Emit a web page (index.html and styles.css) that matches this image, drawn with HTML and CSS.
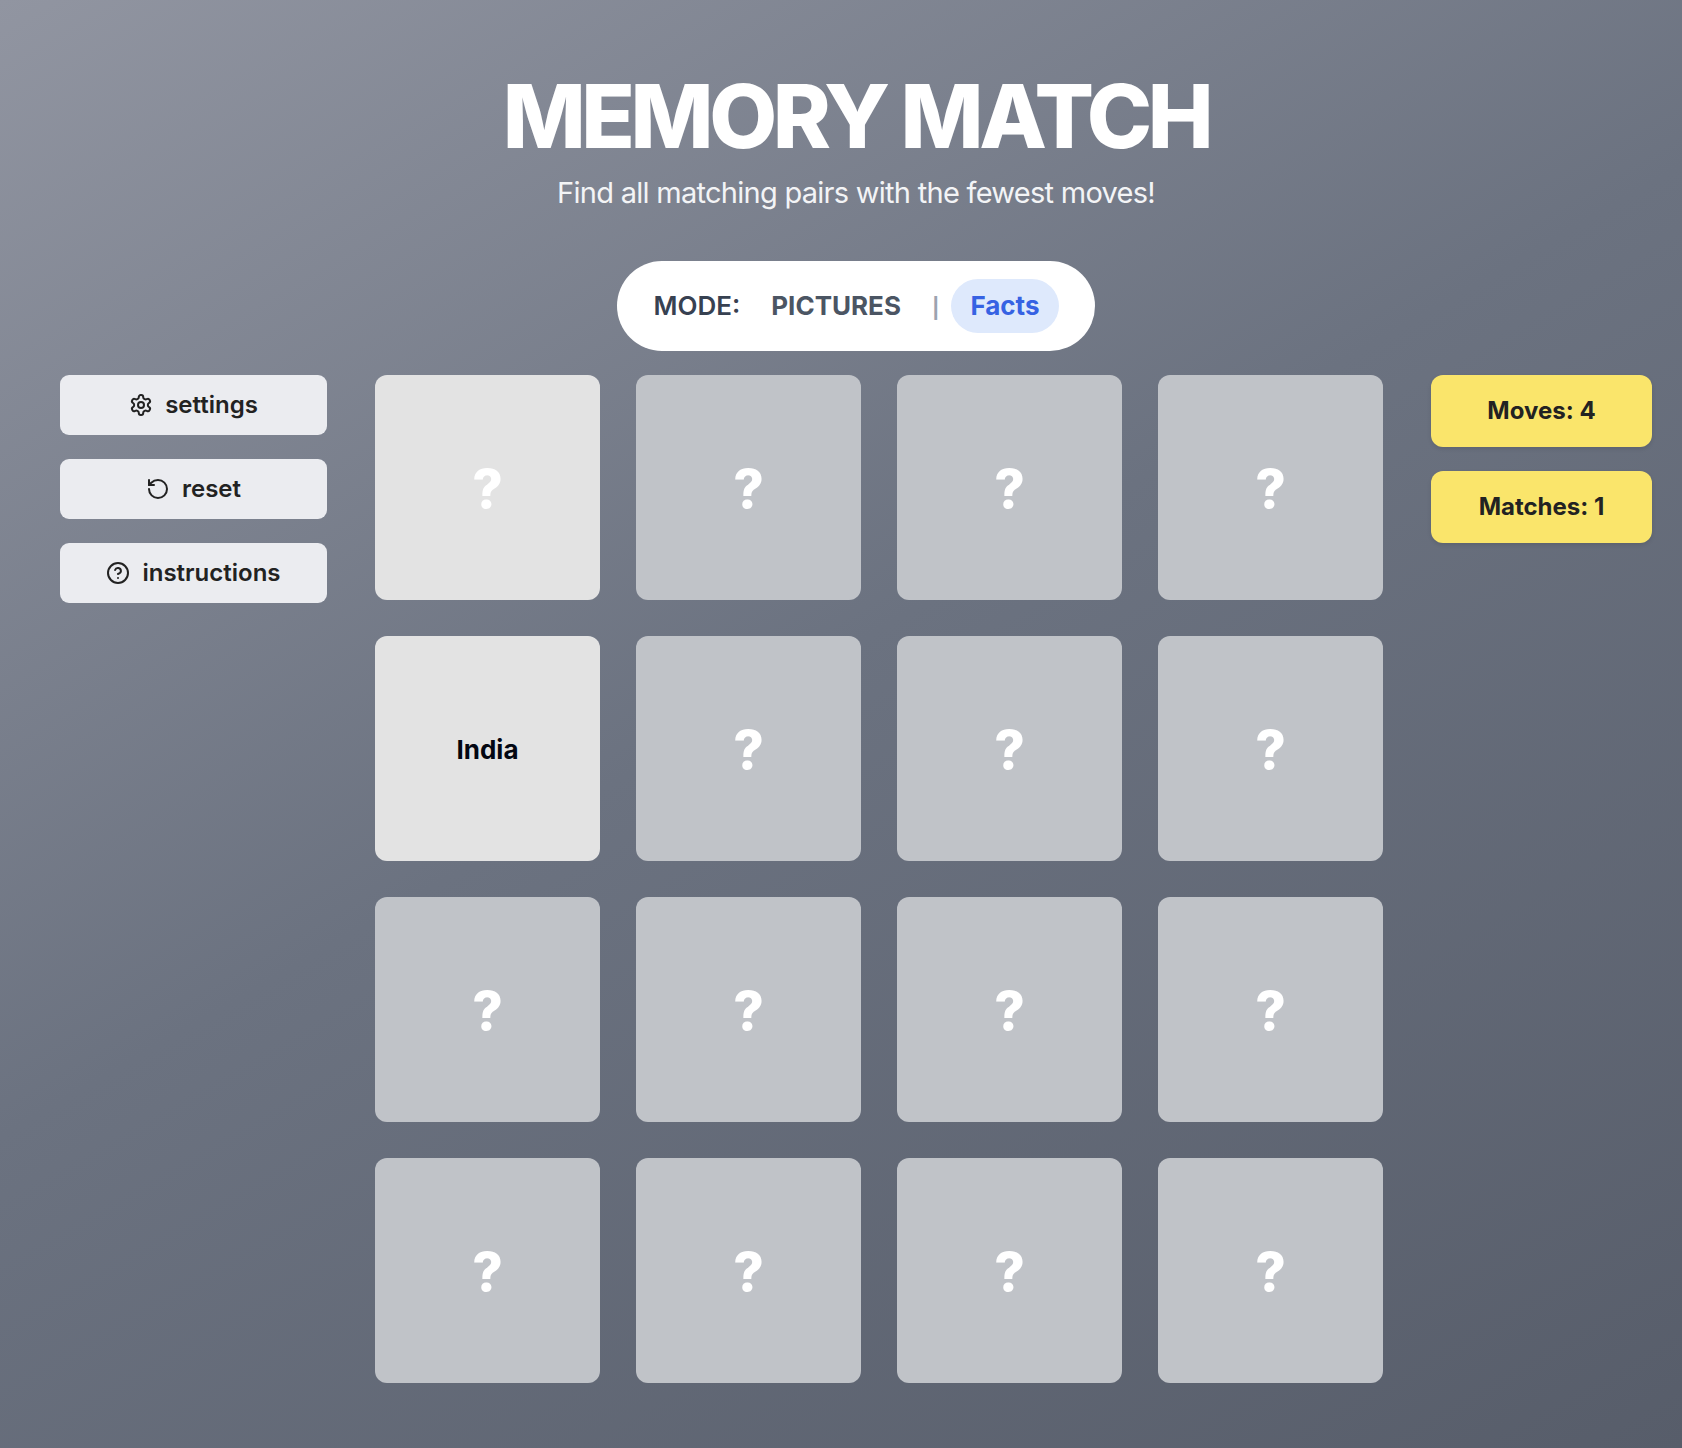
FILE: index.html
```
<!DOCTYPE html>
<html lang="en">
<head>
<meta charset="utf-8">
<meta name="viewport" content="width=device-width, initial-scale=1">
<title>Memory Match</title>
<link rel="stylesheet" href="styles.css">
</head>
<body>
<div class="page">
  <header class="header">
    <h1 class="title">MEMORY MATCH</h1>
    <p class="subtitle">Find all matching pairs with the fewest moves!</p>
    <div class="mode">
      <span class="mode-label">MODE:</span>
      <button type="button" class="mode-option">PICTURES</button>
      <span class="mode-divider">|</span>
      <button type="button" class="mode-option mode-active">Facts</button>
    </div>
  </header>
  <main class="game">
    <nav class="side" aria-label="Game menu">
      <button type="button" class="menu-button">
        <svg class="icon" viewBox="0 0 24 24" aria-hidden="true"><path d="M12.22 2h-.44a2 2 0 0 0-2 2v.18a2 2 0 0 1-1 1.73l-.43.25a2 2 0 0 1-2 0l-.15-.08a2 2 0 0 0-2.73.73l-.22.38a2 2 0 0 0 .73 2.73l.15.1a2 2 0 0 1 1 1.72v.51a2 2 0 0 1-1 1.74l-.15.09a2 2 0 0 0-.73 2.73l.22.38a2 2 0 0 0 2.73.73l.15-.08a2 2 0 0 1 2 0l.43.25a2 2 0 0 1 1 1.73V20a2 2 0 0 0 2 2h.44a2 2 0 0 0 2-2v-.18a2 2 0 0 1 1-1.73l.43-.25a2 2 0 0 1 2 0l.15.08a2 2 0 0 0 2.73-.73l.22-.39a2 2 0 0 0-.73-2.73l-.15-.08a2 2 0 0 1-1-1.74v-.5a2 2 0 0 1 1-1.74l.15-.09a2 2 0 0 0 .73-2.73l-.22-.38a2 2 0 0 0-2.73-.73l-.15.08a2 2 0 0 1-2 0l-.43-.25a2 2 0 0 1-1-1.73V4a2 2 0 0 0-2-2z"/><circle cx="12" cy="12" r="3"/></svg>
        settings
      </button>
      <button type="button" class="menu-button">
        <svg class="icon" viewBox="0 0 24 24" aria-hidden="true"><path d="M3 12a9 9 0 1 0 9-9 9.75 9.75 0 0 0-6.74 2.74L3 8"/><path d="M3 3v5h5"/></svg>
        reset
      </button>
      <button type="button" class="menu-button">
        <svg class="icon" viewBox="0 0 24 24" aria-hidden="true"><circle cx="12" cy="12" r="10"/><path d="M9.09 9a3 3 0 0 1 5.83 1c0 2-3 3-3 3"/><path d="M12 17h.01"/></svg>
        instructions
      </button>
    </nav>
    <section class="board" aria-label="Cards">
      <button type="button" class="card card-open">?</button>
      <button type="button" class="card">?</button>
      <button type="button" class="card">?</button>
      <button type="button" class="card">?</button>
      <button type="button" class="card card-open card-fact">India</button>
      <button type="button" class="card">?</button>
      <button type="button" class="card">?</button>
      <button type="button" class="card">?</button>
      <button type="button" class="card">?</button>
      <button type="button" class="card">?</button>
      <button type="button" class="card">?</button>
      <button type="button" class="card">?</button>
      <button type="button" class="card">?</button>
      <button type="button" class="card">?</button>
      <button type="button" class="card">?</button>
      <button type="button" class="card">?</button>
    </section>
    <aside class="side" aria-label="Score">
      <div class="score">Moves: 4</div>
      <div class="score">Matches: 1</div>
    </aside>
  </main>
</div>
</body>
</html>
```
FILE: styles.css
```
* {
  box-sizing: border-box;
}

body {
  margin: 0;
  font-family: Inter, "Liberation Sans", sans-serif;
  background: #6b7280;
}

button {
  margin: 0;
  border: 0;
  padding: 0;
  background: none;
  font: inherit;
  cursor: pointer;
}

.page {
  min-height: 100vh;
  padding: 72px 30px 60px 60px;
  background: linear-gradient(150deg, #9195a1, #6b7280 47%, #575d6a);
}

.header {
  display: flex;
  flex-direction: column;
  align-items: center;
}

.title {
  margin: 0;
  font-size: 88px;
  font-weight: 800;
  line-height: 88px;
  letter-spacing: -0.05em;
  color: #fff;
}

.subtitle {
  margin: 10px 0 46px;
  font-size: 29px;
  line-height: 45px;
  letter-spacing: -0.025em;
  color: #f3f4f6;
}

.mode {
  display: flex;
  align-items: baseline;
  gap: 12px;
  padding: 18px 36px;
  border-radius: 45px;
  background: #fff;
  font-size: 26px;
  font-weight: 600;
  line-height: 42px;
}

.mode-label {
  color: #374151;
}

.mode-option {
  padding: 6px 19px;
  border-radius: 27px;
  color: #4b5563;
  font-weight: 700;
}

.mode-divider {
  color: #9ca3af;
  font-size: 20px;
  font-weight: 700;
}

.mode-active {
  background: #dee9fc;
  color: #3662e3;
}

.game {
  display: grid;
  grid-template-columns: 267fr 1008fr 221fr;
  align-items: start;
  gap: 48px;
  margin-top: 24px;
}

.side {
  display: flex;
  flex-direction: column;
  gap: 24px;
}

.menu-button {
  display: flex;
  align-items: center;
  justify-content: center;
  gap: 12px;
  padding: 12px;
  border-radius: 9px;
  background: #ebecf0;
  color: #222;
  font-size: 24px;
  font-weight: 600;
  line-height: 36px;
}

.icon {
  width: 24px;
  height: 24px;
  fill: none;
  stroke: currentColor;
  stroke-width: 2;
  stroke-linecap: round;
  stroke-linejoin: round;
}

.board {
  display: grid;
  grid-template-columns: repeat(4, 1fr);
  gap: 36px;
}

.card {
  aspect-ratio: 1;
  padding-top: 2px;
  border-radius: 12px;
  background: #c0c3c8;
  color: #fff;
  font-size: 53px;
  font-weight: 800;
}

.card-open {
  background: #e3e3e3;
}

.card-fact {
  color: #030712;
  font-size: 26px;
  font-weight: 700;
}

.score {
  padding: 18px;
  border-radius: 12px;
  background: #fae56b;
  box-shadow: 0 2px 4px rgb(0 0 0 / 10%);
  color: #222;
  font-size: 24px;
  font-weight: 700;
  line-height: 36px;
  text-align: center;
}
```
